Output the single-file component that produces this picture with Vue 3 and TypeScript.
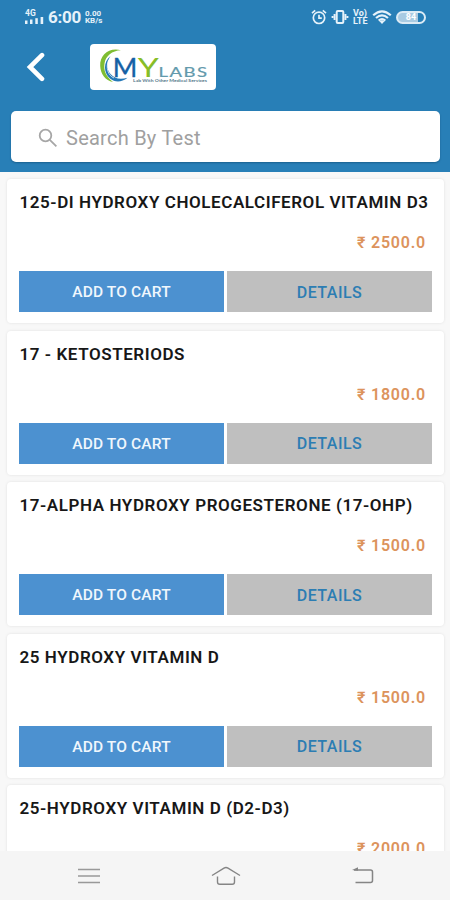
<script setup lang="ts">
interface LabTest {
  name: string
  price: string
}

const tests: LabTest[] = [
  { name: '125-DI HYDROXY CHOLECALCIFEROL VITAMIN D3', price: '2500.0' },
  { name: '17 - KETOSTERIODS', price: '1800.0' },
  { name: '17-ALPHA HYDROXY PROGESTERONE (17-OHP)', price: '1500.0' },
  { name: '25 HYDROXY VITAMIN D', price: '1500.0' },
  { name: '25-HYDROXY VITAMIN D (D2-D3)', price: '2000.0' },
]
</script>

<template>
  <div class="screen">
    <header class="header">
      <div class="status">
        <div class="network">
          <span class="generation">4G</span>
          <svg width="19" height="7" viewBox="0 0 19 7" fill="#e6f2fa">
            <rect x="0" y="3.5" width="2.5" height="3.5" />
            <rect x="5" y="2.5" width="2.5" height="4.5" />
            <rect x="10.3" y="1.2" width="2.5" height="5.8" />
            <rect x="15.6" y="0" width="2.6" height="7" />
          </svg>
        </div>
        <span class="clock">6:00</span>
        <div class="speed"><span>0.00</span><span>KB/s</span></div>
        <div class="indicators">
          <svg width="16" height="16" viewBox="0 0 16 16" fill="none" stroke="#e6f2fa" stroke-width="1.7">
            <circle cx="8" cy="8.8" r="5.7" />
            <path d="M8 5.8v3.3h2.8M1 4.2 4.2 1.4M15 4.2 11.8 1.4" />
          </svg>
          <svg class="vibrate" width="18" height="16" viewBox="0 0 18 16" fill="none" stroke="#e6f2fa" stroke-width="2">
            <rect x="5.7" y="2" width="6.6" height="12" rx="1" />
            <path d="M3.6 5v6M14.4 5v6" />
            <path d="M1.6 7v2M16.4 7v2" />
          </svg>
          <div class="volte"><span>Vo)</span><span>LTE</span></div>
          <svg class="wifi" width="20" height="16" viewBox="0 0 20 16" fill="none" stroke="#e6f2fa" stroke-width="2.2">
            <path d="M1.2 6.2Q10-1.6 18.8 6.2M4 9Q10 3.6 16 9M6.7 11.6Q10 8.8 13.3 11.6" />
            <path d="M7.5 12.2Q10 10.2 12.5 12.2L10 15z" fill="#e6f2fa" stroke="none" />
          </svg>
          <div class="battery"><span>84</span></div>
        </div>
      </div>
      <div class="brandbar">
        <svg class="back" width="20" height="30" viewBox="0 0 20 30" fill="none" stroke="#fff" stroke-width="4.6" stroke-linecap="round" stroke-linejoin="miter">
          <path d="M16 3.2 4 15l12 11.800" />
        </svg>
        <div class="logo">
          <svg width="126" height="46" viewBox="0 0 126 46">
            <path d="M31 6.2C19 3 9.5 11 10.2 22c.4 8 5.2 14.5 12.8 16C15.500 32 13.500 26 14.500 19.500 15.500 12 22 6.500 31 6.200z" fill="#7fbd32" />
            <path d="M20.500 12C13 18 13.500 29 20 34.500c5 4 11.500 4 17.500-.8-7 2-13 1.200-17-3.700-4.500-5.500-4-12 0-18z" fill="#2478b8" />
            <path d="M18.500 16c-3 8-.5 15.500 5.500 18" fill="none" stroke="#fff" stroke-width=".7" />
            <text class="logo-name" x="22.800" y="32.500" font-size="26.500" textLength="24.500" lengthAdjust="spacingAndGlyphs" fill="#1560a5" stroke="#1560a5" stroke-width=".4">M</text>
            <text class="logo-name" x="47.800" y="32.500" font-size="26.500" textLength="21" lengthAdjust="spacingAndGlyphs" fill="#87bd28">Y</text>
            <text class="logo-name" x="68.500" y="33" font-size="12.500" letter-spacing="1" textLength="50" lengthAdjust="spacingAndGlyphs" fill="#639aac" stroke="#639aac" stroke-width=".2">LABS</text>
            <text class="logo-name" x="43" y="37.600" font-size="3.200" font-weight="700" textLength="74" lengthAdjust="spacingAndGlyphs" fill="#56798a">Lab With Other Medical Services</text>
          </svg>
        </div>
      </div>
      <div class="search">
        <svg width="20" height="20" viewBox="0 0 20 20" fill="none" stroke="#a6a6a6" stroke-width="1.800">
          <circle cx="7.500" cy="7.500" r="5.800" />
          <path d="m11.800 11.800 6.600 6.600" />
        </svg>
        <span>Search By Test</span>
      </div>
    </header>

    <main class="list">
      <article v-for="test in tests" :key="test.name" class="card">
        <h2 class="name">{{ test.name }}</h2>
        <p class="price">₹ {{ test.price }}</p>
        <div class="actions">
          <button class="add" type="button">ADD TO CART</button>
          <button class="details" type="button">DETAILS</button>
        </div>
      </article>
    </main>

    <nav class="navbar">
      <svg width="22" height="18" viewBox="0 0 22 18" stroke="#999" stroke-width="1.700">
        <path d="M0 2.500h22M0 9h22M0 15.500h22" />
      </svg>
      <svg width="30" height="20" viewBox="0 0 30 20" fill="none" stroke="#858585" stroke-width="1.400">
        <path d="M1 9.500 13 2.100q2-1.200 4 0L29 9.500M6.500 10.500v5.500q0 2.300 2.300 2.300h12.400q2.300 0 2.300-2.300v-5.500" />
      </svg>
      <svg width="22" height="18" viewBox="0 0 22 18" fill="none" stroke="#858585" stroke-width="1.500">
        <path d="M2 3h16.500q2 0 2 2v8.500q0 2-2 2H3.500" />
        <path d="M0 3 6 .3v3.400z" fill="#858585" stroke="none" />
      </svg>
    </nav>
  </div>
</template>

<style>
body {
  margin: 0;
}
</style>

<style scoped>
.screen {
  width: 450px;
  height: 900px;
  display: flex;
  flex-direction: column;
  overflow: hidden;
  background: #f8f8f8;
  font-family: Roboto, "Liberation Sans", sans-serif;
}

.header {
  flex: none;
  box-sizing: border-box;
  height: 172px;
  background: #287fb7;
}

.status {
  display: flex;
  align-items: center;
  box-sizing: border-box;
  height: 34px;
  padding: 0 24px 0 25px;
  color: #e6f2fa;
}

.network {
  display: flex;
  flex-direction: column;
  width: 19px;
}

.generation {
  font-size: 8.500px;
  font-weight: 700;
  line-height: 7px;
}

.clock {
  margin-left: 4px;
  width: 33px;
  font-size: 17px;
  font-weight: 700;
  letter-spacing: -0.3px;
  white-space: nowrap;
}

.speed,
.volte {
  display: flex;
  flex-direction: column;
  font-weight: 700;
}

.speed {
  margin-left: 4px;
  font-size: 8px;
  line-height: 7.500px;
}

.indicators {
  display: flex;
  align-items: center;
  margin-left: auto;
}

.vibrate {
  margin-left: 4px;
}

.volte {
  width: 16px;
  margin-left: 4px;
  font-size: 9px;
  line-height: 8px;
}

.wifi {
  margin-left: 3px;
}

.battery {
  box-sizing: border-box;
  width: 30px;
  height: 13px;
  margin-left: 4px;
  border: 2px solid #dcebf5;
  border-radius: 7px;
  background: linear-gradient(90deg, #a9cbe2 78%, transparent 78%);
  font-size: 9px;
  font-weight: 700;
  line-height: 9px;
  text-align: center;
  color: #fff;
}

.brandbar {
  display: flex;
  align-items: center;
  box-sizing: border-box;
  height: 66px;
  padding-left: 26px;
}

.logo {
  width: 126px;
  height: 46px;
  margin-left: 44px;
  border-radius: 4px;
  background: #fff;
}

.logo svg {
  display: block;
}

.logo-name {
  font-family: Lato, sans-serif;
}

.search {
  display: flex;
  align-items: center;
  box-sizing: border-box;
  height: 51px;
  margin: 11px 10px 0 11px;
  padding: 3px 0 0 27px;
  gap: 8px;
  border-radius: 5px;
  background: #fff;
  box-shadow: 0 1px 2px rgba(0, 40, 70, 0.35);
  color: #a0a0a0;
  font-size: 20px;
  letter-spacing: 0.25px;
}

.list {
  flex: 1;
  min-height: 0;
  display: flex;
  flex-direction: column;
  gap: 7.600px;
  padding: 7px 6px 0 7px;
  overflow: hidden;
}

.card {
  flex: none;
  box-sizing: border-box;
  height: 144px;
  padding: 12px 12px 0;
  border-radius: 4px;
  background: #fff;
  box-shadow: 0 0 3px rgba(0, 0, 0, 0.1);
}

.name {
  margin: 0 0 0 0.500px;
  font-size: 17px;
  font-weight: 600;
  line-height: 22px;
  letter-spacing: 0.57px;
  white-space: nowrap;
  color: #171717;
}

.price {
  margin: 20px 6px 0 0;
  font-size: 16px;
  font-weight: 600;
  line-height: 20px;
  letter-spacing: 0.8px;
  text-align: right;
  color: #dc935c;
}

.actions {
  display: grid;
  grid-template-columns: 1fr 1fr;
  gap: 3px;
  margin-top: 18px;
}

.actions button {
  height: 41px;
  padding: 1px 0 0;
  border: 0;
  font-family: inherit;
  font-size: 15.500px;
  font-weight: 500;
}

.actions .add {
  background: #4c91d0;
  color: #f0f7fd;
  letter-spacing: 0.15px;
}

.actions .details {
  background: #bfbfbf;
  color: #2c7db3;
  font-size: 16px;
  letter-spacing: 0.5px;
}

.navbar {
  flex: none;
  display: flex;
  justify-content: space-between;
  align-items: center;
  box-sizing: border-box;
  height: 49px;
  padding: 0 76px 0 78px;
  background: #f5f5f5;
}
</style>
